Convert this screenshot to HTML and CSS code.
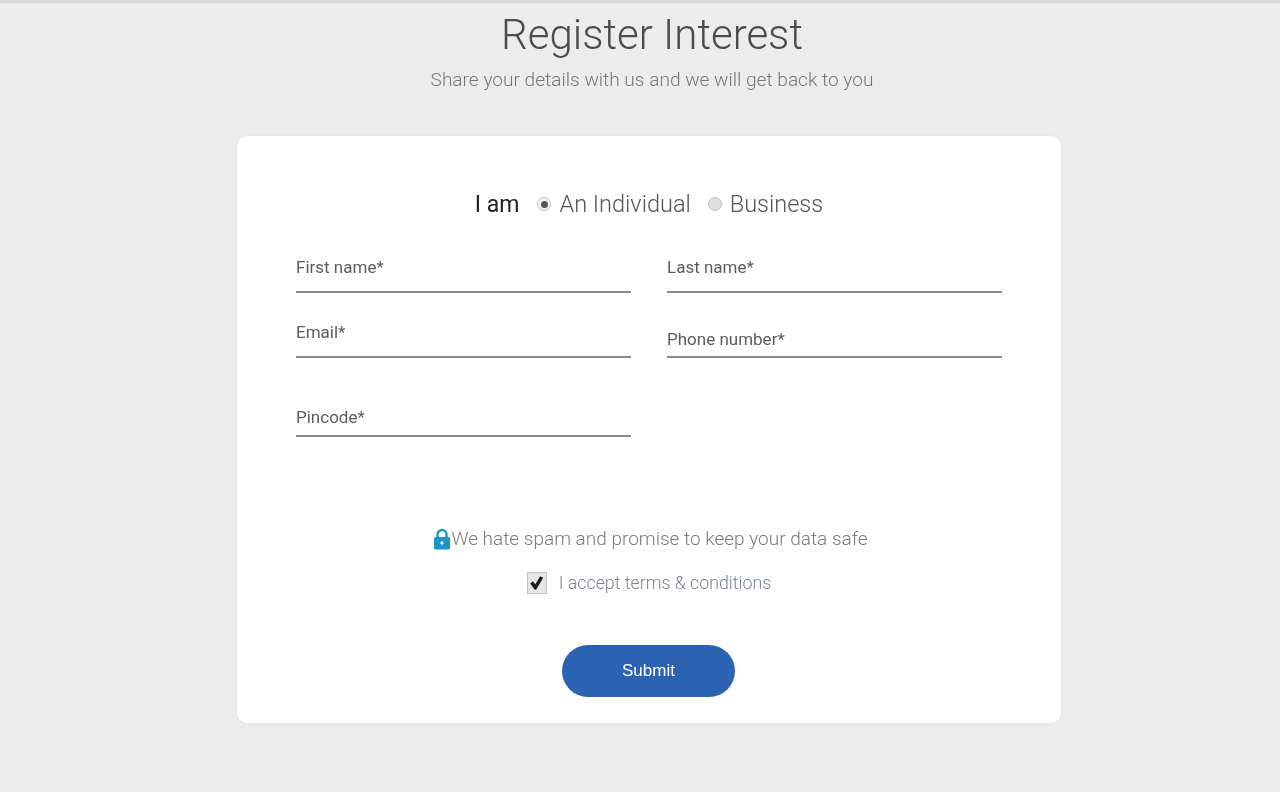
FILE: index.html
```html
<!DOCTYPE html>
<html lang="en">
<head>
<meta charset="utf-8">
<title>Register Interest</title>
<link rel="stylesheet" href="styles.css">
</head>
<body>
<div class="topbar"></div>
<main class="page">
  <header class="head">
    <h1 class="title">Register Interest</h1>
    <p class="sub">Share your details with us and we will get back to you</p>
  </header>
  <form class="card">
    <div class="type-row">
      <span class="iam">I am</span>
      <label class="radio-label"><span class="radio radio-on"></span>An Individual</label>
      <label class="radio-label"><span class="radio"></span>Business</label>
    </div>
    <div class="fields">
      <div class="field f1"><span>First name*</span></div>
      <div class="field f1"><span>Last name*</span></div>
      <div class="field f2"><span>Email*</span></div>
      <div class="field f2 low"><span>Phone number*</span></div>
      <div class="field f3"><span>Pincode*</span></div>
    </div>
    <p class="safe">
      <svg class="lock" viewBox="0 0 18 22" width="18" height="22" aria-hidden="true">
        <path d="M4.5 10V6.5a4.5 4.5 0 0 1 9 0V10" fill="none" stroke="#1b94c4" stroke-width="2.4"/>
        <rect x="1" y="9" width="16" height="12.5" rx="1.5" fill="#1b94c4"/>
        <circle cx="9" cy="15" r="1.7" fill="#d8eef6"/>
      </svg>We hate spam and promise to keep your data safe
    </p>
    <div class="accept">
      <span class="check">
        <svg viewBox="0 0 20 20" width="20" height="20" aria-hidden="true">
          <path d="M2.5 10.5l3-2.4 2.6 3.2L13.5 2.5l3.4 1.8L9 17.5H7.4z" fill="#1c1c1c"/>
        </svg>
      </span>
      <span>I accept terms &amp; conditions</span>
    </div>
    <button class="submit" type="button">Submit</button>
  </form>
</main>
</body>
</html>
```
FILE: styles.css
```css
* { box-sizing: border-box; }
html, body { margin: 0; height: 100%; }
body {
  background: #ececec;
  font-family: Roboto, "Liberation Sans", sans-serif;
  font-weight: 300;
  color: #555;
  overflow: hidden;
}
.topbar { height: 3px; background: #d8d8d8; }
.page { width: 824px; margin-left: 237px; filter: blur(0.45px); }
.head { padding-left: 6px; text-align: center; height: 133px; }
.title {
  margin: 0;
  padding-top: 6px;
  font-size: 42px;
  line-height: 52px;
  font-weight: 300;
  color: #4c4c4c;
}
.sub {
  margin: 6px 0 0;
  font-size: 19.1px;
  line-height: 26px;
  color: #777;
}
.card {
  height: 587px;
  background: #fff;
  border-radius: 10px;
  box-shadow: 0 0 2px rgba(0,0,0,.08);
  padding: 50px 59px 0 59px;
  display: flex;
  flex-direction: column;
}
.type-row {
  display: flex;
  align-items: center;
  justify-content: center;
  height: 36px;
  font-size: 23.5px;
  color: #555;
}
.iam { font-weight: 400; color: #222; font-size: 23px; margin-right: 18px; }
.radio-label { display: flex; align-items: center; margin-right: 17px; }
.radio-label:last-child { margin-right: 0; }
.radio {
  width: 14px;
  height: 14px;
  border-radius: 50%;
  border: 1px solid #c4c4c4;
  background: #dedede;
  margin-right: 8px;
  display: flex;
  align-items: center;
  justify-content: center;
}
.radio-on { background: #f2f2f2; }
.radio-on::after {
  content: "";
  width: 7px;
  height: 7px;
  border-radius: 50%;
  background: #555;
}
.fields {
  display: grid;
  grid-template-columns: 335px 335px;
  column-gap: 36px;
  grid-template-rows: 65px 65px 79px;
  margin-top: 6px;
}
.field {
  border-bottom: 2px solid #8a8a8a;
  font-size: 17px;
  color: #5c5c5c;
  display: flex;
  align-items: flex-end;
  font-weight: 400;
}
.field span { display: block; line-height: 24px; padding-bottom: 12px; }
.field.low span { padding-bottom: 5px; }
.field.f3 span { padding-bottom: 6px; }
.safe {
  margin: 89px 0 0;
  display: flex;
  align-items: center;
  justify-content: center;
  font-size: 19px;
  line-height: 26px;
  color: #7a7a7a;
  padding-left: 3px;
}
.lock { flex: none; }
.accept {
  display: flex;
  align-items: center;
  justify-content: center;
  gap: 12px;
  margin-top: 18px;
  font-size: 17.8px;
  line-height: 26px;
  color: #7d8490;
}
.check {
  width: 20px;
  height: 22px;
  background: #e6e6e6;
  border: 1px solid #c4c4c4;
  display: flex;
  align-items: center;
  justify-content: center;
}
.submit {
  width: 173px;
  height: 52px;
  margin: 49px 0 0 266px;
  border: 0;
  border-radius: 26px;
  background: #2c62b2;
  color: #fff;
  font: 400 17px "Liberation Sans", sans-serif;
}
```
